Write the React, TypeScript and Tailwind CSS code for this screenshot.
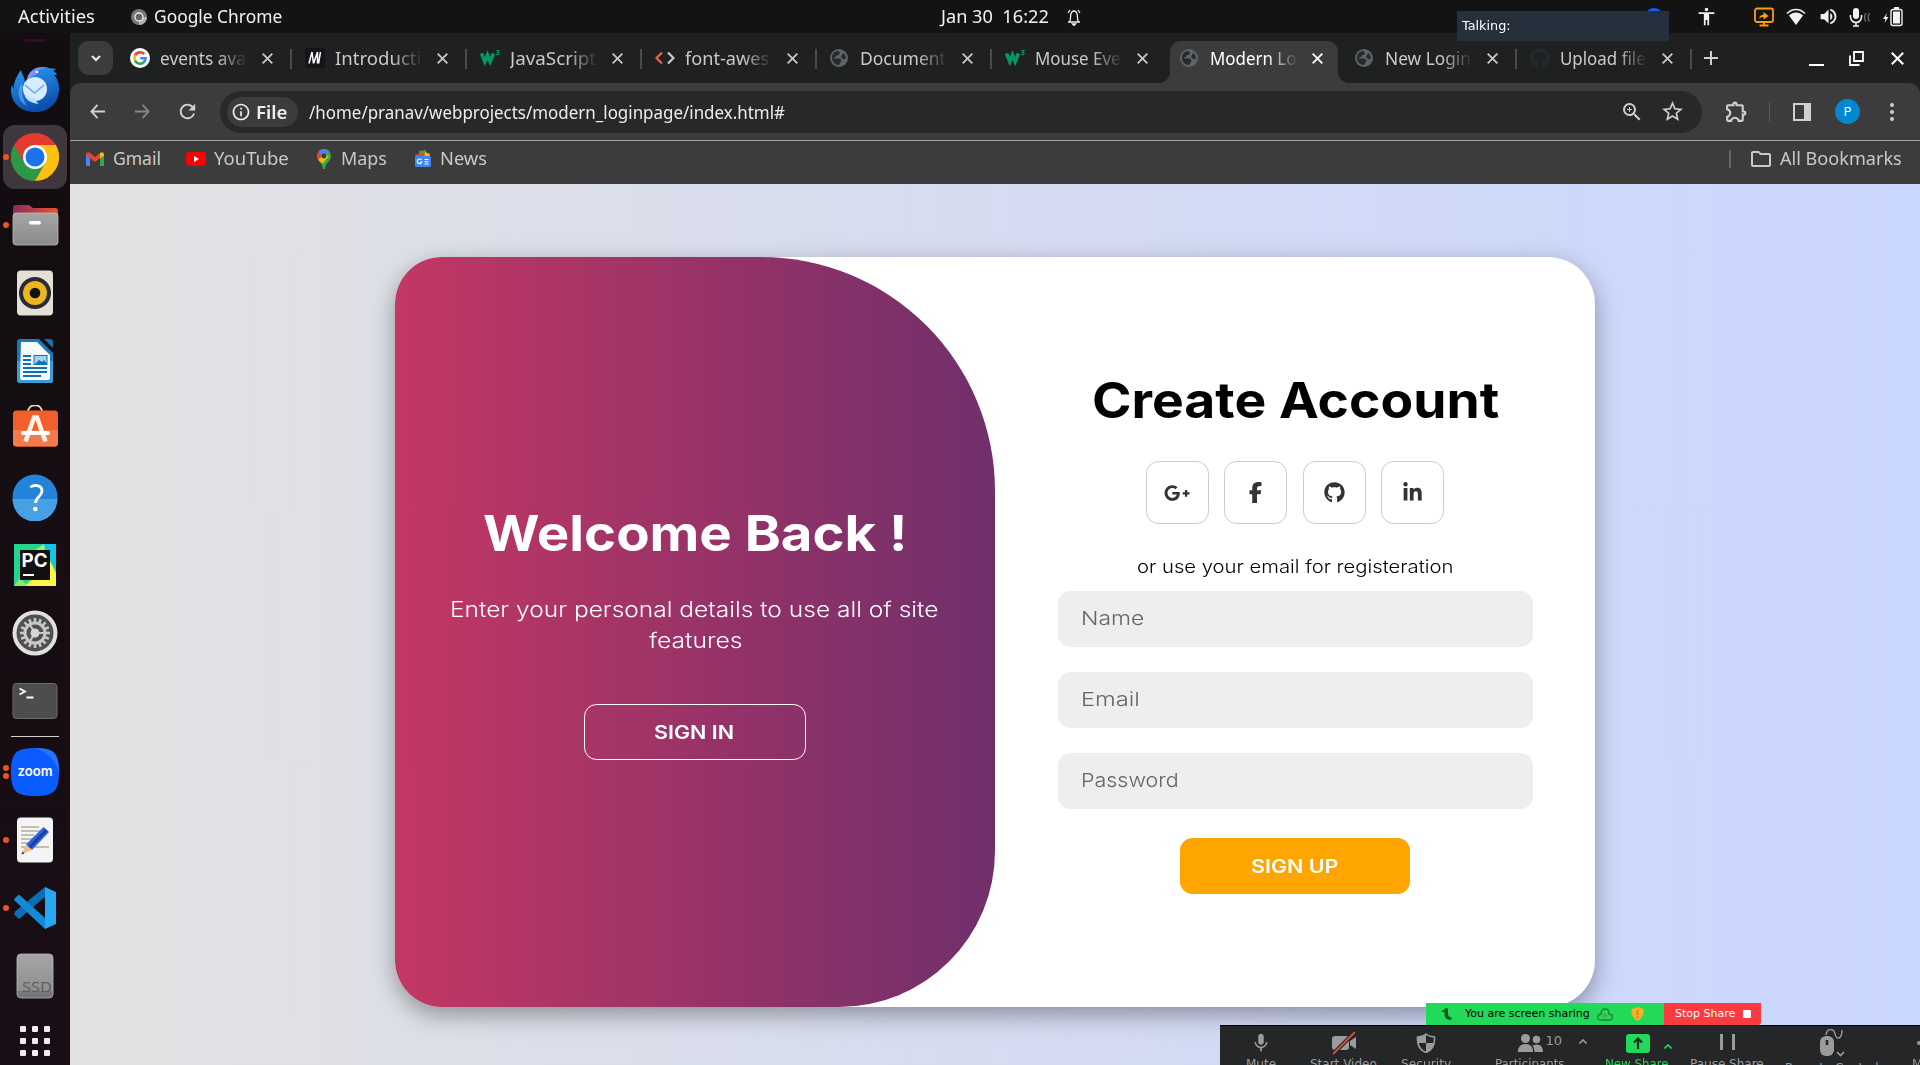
import { useLayoutEffect, useRef, useState } from 'react';
import type { ReactNode } from 'react';
import { FaFacebookF, FaGithub, FaGooglePlusG, FaLinkedinIn } from 'react-icons/fa6';
import { MdOutlineExtension, MdOutlineFolder, MdOutlineInfo, MdPublic, MdRefresh, MdStarBorder, MdZoomIn, MdMic, MdVolumeUp, MdAccessibility } from 'react-icons/md';

/* Single line of text stretched horizontally to a given width. */
function Fit({ w, children, className = '' }: { w: number; children: ReactNode; className?: string }) {
  const ref = useRef<HTMLSpanElement>(null);
  const [scale, setScale] = useState(1);
  useLayoutEffect(() => {
    if (ref.current) setScale(w / ref.current.offsetWidth);
  }, [w]);
  return (
    <span className={`inline-block shrink-0 text-left whitespace-pre ${className}`} style={{ width: w }}>
      <span ref={ref} className="inline-block origin-left" style={{ transform: `scaleX(${scale})` }}>
        {children}
      </span>
    </span>
  );
}

function GoogleG() {
  return (
    <svg viewBox="0 0 20 20" className="size-5">
      <circle cx="10" cy="10" r="10" fill="#fff" />
      <g fill="none" strokeWidth="2.6">
        <path d="M14.2 6.2A5.6 5.6 0 0 0 5 7.4" stroke="#ea4335" />
        <path d="M5.1 7.3a5.6 5.6 0 0 0 0 5.4" stroke="#fbbc05" />
        <path d="M5 12.6a5.6 5.6 0 0 0 8.8 1.6" stroke="#34a853" />
        <path d="M13.6 14.3A5.6 5.6 0 0 0 15.6 10.3H10.2" stroke="#4285f4" />
      </g>
    </svg>
  );
}

function W3() {
  return (
    <svg viewBox="0 0 20 20" className="size-5" fill="none" stroke="#059862">
      <path d="M1.5 5.5l3.3 8L7.5 7l2.700 6.500L13.5 5.5" strokeWidth="3.6" />
      <path d="M16.3 2.500h2.700l-1.600 2c2.400.2 2 3-1.200 2" strokeWidth="1.100" />
    </svg>
  );
}

/* Default page icon: a grey disc with dark land masses. */
function Globe() {
  return (
    <svg viewBox="0 0 18 18" className="size-[18px]">
      <circle cx="9" cy="9" r="9" fill="#5f6368" />
      <path d="M2 8.500C2 5 4.500 2.300 8 2l2 1.500-1 2.500H7L6 8H4.500L4 9.500h6l1.500 2-1 2L9 16C5 16 2 13 2 8.500zM13 4q2.500 1.500 3 5l-1.500 1.500-2-1L11 8z" fill="#27292a" />
    </svg>
  );
}

const tabs: { icon: ReactNode; text: string; w: number; active?: boolean; sep: boolean }[] = [
  { icon: <GoogleG />, text: 'events ava', w: 86, sep: true },
  {
    icon: (
      <svg viewBox="0 0 20 20" className="size-5">
        <path fill="#15141a" d="M0 0h20v20H0z" />
        <path d="M4 15.500l3-11.500 1.500 11.500 4-11.500v11.500M15.500 4l-2 11.500" fill="none" stroke="#fff" strokeWidth="1.500" />
      </svg>
    ),
    text: 'Introducti', w: 86, sep: true,
  },
  { icon: <W3 />, text: 'JavaScript', w: 86, sep: true },
  {
    icon: (
      <svg viewBox="0 0 20 20" className="size-5" fill="none" strokeWidth="2.2">
        <path d="M7 4.500L1.500 10 7 15.500" stroke="#e8673c" />
        <path d="M13 4.500L18.500 10 13 15.500" stroke="#c8c8c8" />
      </svg>
    ),
    text: 'font-awes', w: 84, sep: true,
  },
  { icon: <Globe />, text: 'Document', w: 86, sep: true },
  { icon: <W3 />, text: 'Mouse Eve', w: 86, sep: false },
  { icon: <Globe />, text: 'Modern Lo', w: 86, active: true, sep: false },
  { icon: <Globe />, text: 'New Login', w: 86, sep: true },
  { icon: <FaGithub className="size-5 text-[#24292e]" />, text: 'Upload file', w: 86, sep: true },
];

function X({ className }: { className: string }) {
  return (
    <svg viewBox="0 0 10 10" className={className} fill="none" stroke="currentColor" strokeWidth="1.6">
      <path d="M.6.6l8.800 8.800M9.400.6L.6 9.400" />
    </svg>
  );
}

function TopBar() {
  return (
    <header className="relative flex h-[33px] shrink-0 items-center bg-[#131313] font-['Noto_Sans',sans-serif] text-[17.5px] leading-[30px] text-[#f2f2f2]">
      <Fit w={77} className="-mt-[2px] ml-[18px]">Activities</Fit>
      <svg viewBox="0 0 16 16" className="ml-9 size-4">
        <circle cx="8" cy="8" r="8" fill="#777" />
        <path d="M8 8h8a8 8 0 0 1-8 8z" fill="#b0b0b0" />
        <circle cx="8" cy="8" r="4" fill="#666" stroke="#eee" strokeWidth="1.3" />
      </svg>
      <Fit w={128} className="-mt-[2px] ml-[7px]">Google Chrome</Fit>
      <Fit w={108} className="-mt-[2px] ml-[659px]">{'Jan 30  16:22'}</Fit>
      <svg viewBox="0 0 14 18" className="ml-[18px] h-[18px] w-3.5" fill="none" stroke="#eee" strokeWidth="1.3">
        <path d="M1 14h12M2.500 14c1.500-2 .8-4.500 1.200-7C4.200 4 5.500 3 7 3s2.800 1 3.300 4c.4 2.500-.3 5 1.200 7M1 5L3 2M13 5L11 2" />
        <path d="M5.500 16h3L7 17.500z" fill="#eee" />
      </svg>
      <div className="absolute right-[256px] top-[8px] h-5 w-5 rounded-full bg-[#1d5bf5]" />
      <div className="ml-auto flex items-center pr-[17px]">
        <MdAccessibility className="mr-[37px] size-[21px]" />
        <svg viewBox="0 0 20 20" className="mr-3 size-5" fill="none" stroke="#ff9d0a" strokeWidth="1.8">
          <rect x="1" y="1.500" width="18" height="13.500" rx="2" />
          <path d="M10 15v3M5.500 18.500h9" />
          <path d="M5 12c.5-3 2-4.200 4.500-4.200V5l5 4-5 3.500V10C7.500 10 6 10.500 5 12z" fill="#ff9d0a" stroke="none" />
        </svg>
        <svg viewBox="0 0 20 18" className="mr-3 h-[18px] w-5">
          <path d="M1 5.500C6 0 14 0 19 5.500" fill="none" stroke="#eee" strokeWidth="1.500" />
          <path d="M3 7.500c4-4 10-4 14 0L10 17z" fill="#f2f2f2" />
        </svg>
        <MdVolumeUp className="mr-[10px] size-[21px]" />
        <svg viewBox="0 0 22 20" className="mr-3 h-5 w-[22px]" fill="none" stroke="#f2f2f2" strokeWidth="1.6">
          <rect x="4" y="1" width="6" height="11" rx="3" fill="#f2f2f2" stroke="none" />
          <path d="M1.500 8v2a5.500 5.500 0 0 0 11 0V8M7 15.500V19M4 19h6" />
          <path d="M17 6q-3 4.500 0 8.500M20.500 6q-3 4.500 0 8.500" stroke="#777" strokeWidth="1.2" />
        </svg>
        <svg viewBox="0 0 20 20" className="size-5">
          <path d="M4 6L0 12h2.500L1.500 16l4-6H3z" fill="#f2f2f2" />
          <rect x="8" y="2.500" width="11" height="16" rx="2" fill="none" stroke="#f2f2f2" strokeWidth="1.4" />
          <path d="M10 4.500h7v12h-7zM11 0h5v2h-5z" fill="#f2f2f2" />
        </svg>
      </div>
      <div className="absolute left-[1457px] top-[11px] z-10 flex h-[30px] w-[212px] items-center bg-[#26303c] pl-[5px] font-['DejaVu_Sans',sans-serif] text-[12px] text-white">
        <Fit w={49}>Talking:</Fit>
      </div>
    </header>
  );
}

function DockItem({ children, dots = 0, active = false }: { children: ReactNode; dots?: number; active?: boolean }) {
  return (
    <div className="relative flex h-[68px] w-full shrink-0 items-center justify-center">
      <div className={active ? 'flex size-16 items-center justify-center rounded-xl bg-[#3e373d]' : 'flex size-16 items-center justify-center'}>
        <svg viewBox="0 0 48 48" className="size-12">{children}</svg>
      </div>
      {dots > 0 && (
        <div className="absolute left-[3px] top-0 flex h-full flex-col items-center justify-center gap-[2.5px]">
          <i className="size-1.5 rounded-full bg-[#e95420]" />
          {dots > 1 && <i className="size-1.5 rounded-full bg-[#e95420]" />}
        </div>
      )}
    </div>
  );
}

const gearTeeth = Array.from({ length: 16 }, (_, i) => i * 22.5);

function Dock() {
  return (
    <nav className="flex h-[1032px] w-[70px] shrink-0 flex-col items-center overflow-hidden bg-[linear-gradient(#120d11,#190e15)]">
      <div className="flex h-[22px] w-full shrink-0 justify-center pt-[6px]">
        <div className="h-[3px] w-[22px] rounded-b-full bg-[#3a0a22]" />
      </div>
      <DockItem>
        <defs>
          <linearGradient id="tb" x1="0" y1="0" x2="0.3" y2="1">
            <stop offset="0" stopColor="#2a9df4" />
            <stop offset="1" stopColor="#0b4fae" />
          </linearGradient>
        </defs>
        <path d="M16 14C18 4 28 0 38 3c2 .5 5 .8 7 .8-1 1.500-2 2-3 2.200 2 .5 3 2 4 4-1 .2-2 0-3 0 4 4 5 9 5 14 0 14-10 23-24 23S0 38 0 25c0-3 .5-4 1.500-5 0 2 .5 3 1 4C3 17 5 12 10 5c1 5 4 7 4 12z" fill="url(#tb)" />
        <path d="M16 14C18 5 27 0 37 3c-8-.5-12 3-12 7-4 0-6 3-9 7z" fill="#8f8bf0" />
        <path d="M10 19c-5 9-2 18 6 22-4-7-6-12-4-20z" fill="#7db5ff" opacity=".55" />
        <circle cx="24" cy="24" r="12" fill="#d9ecff" />
        <path d="M14 30c0 4 5 8 14 9-2-1-3-3-3-5z" fill="#bfe0ff" />
        <path d="M14 20l9.500 8 9.500-8" fill="none" stroke="#6aa7e8" strokeWidth="1.500" />
        <circle cx="26" cy="7" r="1.300" fill="#fff" />
      </DockItem>
      <DockItem dots={1} active>
        <circle cx="24" cy="24" r="24" fill="#e33b2e" />
        <path d="M3.200 12A24 24 0 0 0 24 48l10.400-18L24 36 13.600 30z" fill="#2b9a47" />
        <path d="M44.800 12A24 24 0 0 1 24 48l10.400-18V18L24 12z" fill="#fcc10f" />
        <path d="M3.200 12h41.600L24 12a12 12 0 0 0-10.400 18z" fill="#e33b2e" />
        <circle cx="24" cy="24" r="12" fill="#fff" />
        <circle cx="24" cy="24" r="9.500" fill="#1a73e8" />
      </DockItem>
      <DockItem dots={1}>
        <defs>
          <linearGradient id="fo"><stop stopColor="#8a2c5c" /><stop offset="1" stopColor="#e8542a" /></linearGradient>
          <linearGradient id="gr" x2="0" y2="1"><stop stopColor="#a5a5a5" /><stop offset="1" stopColor="#8b8b8b" /></linearGradient>
        </defs>
        <path d="M2 16V7q0-3 3-3h13l4 3h22q3 0 3 3v8z" fill="url(#fo)" />
        <rect x="2" y="12" width="45" height="32" rx="3" fill="url(#gr)" stroke="#bbb" strokeWidth=".8" />
        <rect x="18" y="20" width="12" height="3.500" rx="1.700" fill="#fff" />
      </DockItem>
      <DockItem>
        <rect x="6" y="1.500" width="36" height="45" rx="4" fill="#e4e0d5" />
        <circle cx="24" cy="24" r="16" fill="#2b2b33" />
        <circle cx="24" cy="24" r="12" fill="#eab71c" />
        <circle cx="24" cy="24" r="5.300" fill="#111" />
      </DockItem>
      <DockItem>
        <path d="M9 2h19l14 14v27q0 3-3 3H9q-3 0-3-3V5q0-3 3-3z" fill="#1a79b8" />
        <path d="M6 24h36v19q0 3-3 3H9q-3 0-3-3z" fill="#3a9dd8" />
        <path d="M10 5h16l13 13v23q0 2-2 2H11q-2 0-2-2z" fill="#f5fbff" />
        <path d="M33 2h6q3 0 3 3v6z" fill="#1771ab" />
        <path d="M12 19h8M12 23h8M12 27h8M12 31h24M12 35h24M12 39h18" stroke="#0f70b3" strokeWidth="2" />
        <rect x="23" y="18.500" width="13" height="9" fill="#9fd4f2" stroke="#0f70b3" />
        <path d="M24 27l4-4 3 2 2-2 3 4z" fill="#0f70b3" />
      </DockItem>
      <DockItem>
        <path d="M17 7c0-9 14-9 14 0" fill="none" stroke="#f4d9a8" strokeWidth="1.8" />
        <rect x="2" y="5.500" width="45" height="36" rx="3.500" fill="#f1602a" />
        <path d="M2 25h45v13q0 3.500-3.500 3.500h-38Q2 41.500 2 38z" fill="#f37b4b" />
        <path d="M14.500 36.500L23 12.500h3l8.500 24" fill="none" stroke="#fff0e8" strokeWidth="4.500" />
        <path d="M12 28h25" stroke="#fff" strokeWidth="4" strokeLinecap="round" />
      </DockItem>
      <DockItem>
        <circle cx="24" cy="24" r="22.500" fill="#2283d8" />
        <path d="M1.500 26h45a22.500 22.500 0 0 1-45 0z" fill="#45a1e3" />
        <path d="M19.500 14.500c2-3 11.500-3 11.500 3.500 0 5-6.500 6-6.500 12" fill="none" stroke="#fff" strokeWidth="2.8" />
        <circle cx="24.300" cy="36" r="2.300" fill="#fff" />
      </DockItem>
      <DockItem>
        <path d="M3 3h42v42H3z" fill="#25d58f" />
        <path d="M30 3h15v25z" fill="#12c4ea" />
        <path d="M16 15L33 3l2 12z" fill="#a8ef62" />
        <path d="M39 20l6 12v13H14z" fill="#fcf54a" />
        <path d="M3 45h14l-8-8z" fill="#8bea6b" />
        <path d="M9 9h30v30H9z" fill="#111" />
        <text x="10.500" y="25.500" fill="#fff" fontFamily="Inter" fontWeight="700" fontSize="18.500" textLength="26" lengthAdjust="spacingAndGlyphs">PC</text>
        <path d="M12 33h11v2H12z" fill="#fff" />
      </DockItem>
      <DockItem>
        <circle cx="24" cy="24" r="20.500" fill="#505050" stroke="#e0e0e0" strokeWidth="4" />
        <g fill="#c8c8c8">
          {gearTeeth.map((a) => (
            <rect key={a} x="22.700" y="9" width="2.600" height="5" transform={`rotate(${a} 24 24)`} />
          ))}
        </g>
        <circle cx="24" cy="24" r="10" fill="none" stroke="#c8c8c8" strokeWidth="3" />
        <path d="M24 24h9M24 24l-5 8M24 24l-5-8" stroke="#c8c8c8" strokeWidth="2.2" />
        <circle cx="24" cy="24" r="4.500" fill="#d5d5d5" />
      </DockItem>
      <DockItem>
        <rect x="2" y="6.500" width="44" height="35" rx="3.500" fill="#4d4d4d" stroke="#6c6c6c" />
        <path d="M8.500 11.500l5.500 3-5.500 3M15.500 20.500h7" fill="none" stroke="#fff" strokeWidth="1.8" />
      </DockItem>
      <div className="flex h-[3px] shrink-0 items-center"><div className="h-px w-12 bg-[#d5d0d4]" /></div>
      <DockItem dots={2}>
        <path d="M24 0C43 0 48 5 48 24S43 48 24 48 0 43 0 24 5 0 24 0z" fill="#0b5cff" />
        <path d="M24 0C43 0 48 5 48 24Q42 6 24 0z" fill="#3c80ff" opacity=".6" />
        <text x="6.500" y="28" fill="#fff" fontFamily="Inter" fontWeight="600" fontSize="13.500" textLength="35" lengthAdjust="spacingAndGlyphs">zoom</text>
      </DockItem>
      <DockItem dots={1}>
        <rect x="6" y="1.500" width="36" height="45" rx="4" fill="#f4f4f4" />
        <path d="M10 11h18M10 15h24M10 19h13M10 23h15M10 27h10M10 31h28" stroke="#c3bfb4" strokeWidth="1.8" />
        <path d="M32.500 11l5.500 5-17 18-6-5.500z" fill="#2d62d8" />
        <path d="M34.500 13l2 2-17.500 18-2-2z" fill="#1a429e" />
        <path d="M15 28.500l6 5.500L10.500 38.500z" fill="#f5bd83" />
        <path d="M11.500 35.500l2 2-3 1z" fill="#333" />
      </DockItem>
      <DockItem dots={1}>
        <path d="M34 13L8 35l-5-4.500 1-3L34 3z" fill="#0b6db3" />
        <path d="M4 14l4-3.500L34 34v11L3 16z" fill="#1489d4" />
        <path d="M34 3l11 5v32l-11 5z" fill="#27a7f2" />
      </DockItem>
      <DockItem>
        <rect x="6" y="2" width="36" height="44" rx="4" fill="url(#gr)" stroke="#bdbdbd" strokeWidth=".8" />
        <path d="M6.500 39h35v3q0 3.500-4 3.500h-27q-4 0-4-3.500z" fill="#777" />
        <text x="11" y="40" fill="#5e5e5e" fontFamily="Noto Sans" fontSize="15" textLength="30" lengthAdjust="spacingAndGlyphs">SSD</text>
      </DockItem>
      <div className="grid shrink-0 grid-cols-3 gap-1.5 pt-4">
        {Array.from({ length: 9 }, (_, i) => (
          <i key={i} className="size-1.5 rounded-[1px] bg-[#eee]" />
        ))}
      </div>
    </nav>
  );
}

function TabStrip() {
  return (
    <div className="flex h-[50px] items-start bg-[#1f2120] pl-2 pt-2 text-[#c9c9c9]">
      <button className="flex h-[34px] w-[35px] shrink-0 items-center justify-center rounded-[11px] bg-[#3c3c3c]">
        <svg viewBox="0 0 10 7" className="h-[7px] w-2.5" fill="none" stroke="#eee" strokeWidth="2"><path d="M1 1l4 4 4-4" /></svg>
      </button>
      <div className="ml-[3px] flex">
        {tabs.map((t) => (
          <div key={t.text} className="relative flex h-[42px] w-[175px] shrink-0 items-start">
            {t.active && (
              <div className="absolute inset-y-0 left-[4px] w-[168px] rounded-t-[11px] bg-[#3c3c3c]">
                <div className="absolute -left-3 bottom-0 size-3 bg-[radial-gradient(circle_at_0_0,transparent_12px,#3c3c3c_12.5px)]" />
                <div className="absolute -right-3 bottom-0 size-3 bg-[radial-gradient(circle_at_100%_0,transparent_12px,#3c3c3c_12.5px)]" />
              </div>
            )}
            <div className="relative flex h-[34px] w-full items-center pl-3.5">
              <span className="flex w-[30px] shrink-0">{t.icon}</span>
              <div className={t.active ? 'w-[88px] overflow-hidden text-white mask-r-from-65% mask-r-to-100%' : 'w-[88px] overflow-hidden mask-r-from-65% mask-r-to-100%'}>
                <Fit w={t.w} className="align-top leading-[30px]">{t.text}</Fit>
              </div>
              <X className={t.active ? 'ml-3.5 size-[11px] text-white' : 'ml-3.5 size-[11px]'} />
              {t.sep && <div className="absolute right-[-1px] top-2 h-5 w-0.5 bg-[#4a4a4a]" />}
            </div>
          </div>
        ))}
      </div>
      <div className="flex h-[34px] flex-1 items-center">
        <svg viewBox="0 0 14 14" className="ml-[13px] size-3.5" stroke="#d0d0d0" strokeWidth="2"><path d="M7 0v14M0 7h14" /></svg>
        <div className="ml-auto flex items-center text-white">
          <div className="mr-[25px] mt-[13px] h-[2px] w-[15px] bg-white" />
          <svg viewBox="0 0 15 15" className="mr-[27px] size-[15px]" fill="none" stroke="#fff" strokeWidth="1.8"><path d="M5 1h9v9H5zM1 4.500V14h9.500" /></svg>
          <X className="mr-4 size-[13px]" />
        </div>
      </div>
    </div>
  );
}

function Arrow({ className }: { className: string }) {
  return (
    <svg viewBox="0 0 16 16" className={className} fill="none" stroke="currentColor" strokeWidth="2"><path d="M16 8H1.500M8 1L1.500 8 8 15" /></svg>
  );
}

function Toolbar() {
  return (
    <div className="bg-[#1f2120]">
      <div className="flex h-[57px] items-center rounded-t-[11px] bg-[#3c3c3c] text-[#d0d0d0]">
        <Arrow className="ml-5 size-[15px]" />
        <Arrow className="ml-[30px] size-[15px] rotate-180 text-[#858585]" />
        <MdRefresh className="ml-[26px] size-[23px]" />
        <div className="ml-[21px] flex h-[42px] w-[1482px] items-center rounded-full bg-[#282828] pl-[7px]">
          <div className="flex h-[30px] w-[71px] items-center rounded-full bg-[#3c3c3c] pl-1 text-[#eee]">
            <MdOutlineInfo className="size-5" />
            <Fit w={32} className="ml-[5px] font-semibold leading-[28px]">File</Fit>
          </div>
          <Fit w={476} className="ml-[11px] leading-[30px] text-[#ececec]">/home/pranav/webprojects/modern_loginpage/index.html#</Fit>
          <MdZoomIn className="ml-auto mr-[16px] size-[24px]" />
          <MdStarBorder className="mr-[17px] size-[25px]" />
        </div>
        <MdOutlineExtension className="ml-[22px] size-[25px]" />
        <div className="ml-[20px] h-5 w-px bg-[#5c5c5c]" />
        <svg viewBox="0 0 18 18" className="ml-[23px] size-[18px]"><path d="M1 1h16v16H1z" fill="none" stroke="currentColor" strokeWidth="2" /><path d="M11 0h7v18h-7z" fill="currentColor" /></svg>
        <div className="ml-[24px] flex size-[25px] items-center justify-center rounded-full bg-[#0288d1] font-[Roboto,sans-serif] text-[12px] text-white">P</div>
        <div className="ml-[30px] flex flex-col gap-[3px]">
          {[0, 1, 2].map((i) => <i key={i} className="size-1 rounded-full bg-[#d0d0d0]" />)}
        </div>
      </div>
    </div>
  );
}

function Bookmarks() {
  return (
    <div className="flex h-[44px] items-center border-t border-[#a0a3a2] bg-[#3c3c3c] pb-[7px] leading-[30px] text-[#c9c9c9]">
      <svg viewBox="0 0 18 14" className="ml-4 h-3.5 w-[18px]">
        <path d="M0 2v12h4V6z" fill="#4285f4" />
        <path d="M18 2v12h-4V6z" fill="#34a853" />
        <path d="M0 2q1-3 4-1l5 4 5-4v5L9 10 4 6 0 3.500z" fill="#ea4335" />
        <path d="M14 1q3-2 4 1v1.500L14 6.500z" fill="#fbbc04" />
      </svg>
      <Fit w={48} className="-mt-[2px] ml-[9px]">Gmail</Fit>
      <svg viewBox="0 0 20 14" className="ml-[25px] h-3.5 w-5"><rect width="20" height="14" rx="3.500" fill="#f00" /><path d="M8 4l5 3-5 3z" fill="#fff" /></svg>
      <Fit w={75} className="-mt-[2px] ml-2">YouTube</Fit>
      <svg viewBox="0 0 14 20" className="ml-[28px] h-5 w-3.5">
        <path d="M7 0a7 7 0 0 1 7 7c0 5-5.500 6-6 13H6C5.500 13 0 12 0 7a7 7 0 0 1 7-7z" fill="#34a853" />
        <path d="M0 7a7 7 0 0 1 2-5l4 3-4.800 5.800Q0 9.500 0 7z" fill="#ea4335" />
        <path d="M2 2a7 7 0 0 1 10 0L5 8z" fill="#4285f4" />
        <path d="M1.200 10.800L9 5l4 4.500c-2 2.500-4 4-4.500 5.500L4.500 14q-2-1.500-3.300-3.200z" fill="#fbbc04" opacity=".95" />
        <path d="M14 7c0 4-4 5.500-5.500 9H5l5-7z" fill="#34a853" />
        <circle cx="7" cy="7" r="2.400" fill="#3c3c3c" />
      </svg>
      <Fit w={46} className="-mt-[2px] ml-[10px]">Maps</Fit>
      <svg viewBox="0 0 18 18" className="ml-[27px] size-[18px]">
        <path d="M5 1l7-1 1 8H5z" fill="#34a853" />
        <path d="M1 5l10-3 2 6H2z" fill="#ea4335" />
        <path d="M11 2l5 2-1 4h-5z" fill="#fbbc04" />
        <rect x="1" y="6" width="16" height="11" rx="1.500" fill="#4285f4" />
        <path d="M7.500 10A2.300 2.300 0 1 0 7.800 12H5.800M10.500 9.500h4M10.500 11.700h4M10.500 14h4" fill="none" stroke="#fff" strokeWidth="1.1" />
      </svg>
      <Fit w={47} className="-mt-[2px] ml-[8px]">News</Fit>
      <div className="ml-auto h-[18px] w-0.5 bg-[#666]" />
      <MdOutlineFolder className="ml-[18px] size-[24px]" />
      <Fit w={122} className="-mt-[2px] ml-[7px] mr-[18px]">All Bookmarks</Fit>
    </div>
  );
}

function Field({ label, w }: { label: string; w: number }) {
  return (
    <div className="flex h-14 w-[475px] items-center rounded-[12.5px] bg-[#eee] pb-px pl-[23px] text-[19.3px] font-light text-[#666]">
      <Fit w={w}>{label}</Fit>
    </div>
  );
}

const socials = [FaGooglePlusG, FaFacebookF, FaGithub, FaLinkedinIn];

function Card() {
  return (
    <main className="mx-auto mt-[73px] flex h-[750px] w-[1200px] overflow-hidden rounded-[47px] bg-white font-[Inter,sans-serif] shadow-[0_8px_23px_rgba(0,0,0,0.35)]">
      <section className="flex w-[600px] flex-col items-center rounded-tr-[234px] rounded-br-[156px] bg-[linear-gradient(to_right,#c33764,#702f6b)] pt-[246px] text-white">
        <h1 className="text-[49.5px] leading-[60px] font-bold"><Fit w={424}>Welcome Back !</Fit></h1>
        <p className="mt-[31px] flex flex-col items-center text-[21px] leading-[31px] font-light">
          <Fit w={488} className="-ml-[2px]">Enter your personal details to use all of site</Fit>
          <Fit w={93}>features</Fit>
        </p>
        <button className="mt-12 flex h-14 w-[222px] items-center justify-center rounded-[12.5px] border border-white text-[18px] font-semibold">
          <Fit w={80} className="-ml-[2px]">SIGN IN</Fit>
        </button>
      </section>
      <section className="flex w-[600px] flex-col items-center pt-[112px] text-black">
        <h1 className="mt-px text-[49.5px] leading-[60px] font-bold"><Fit w={407}>Create Account</Fit></h1>
        <div className="mt-[31px] flex gap-[15.5px]">
          {socials.map((Icon, i) => (
            <a key={i} className="flex size-[63px] items-center justify-center rounded-[12.5px] border border-[#ccc] text-[#333]">
              <Icon className={i === 0 ? 'h-[22px] w-[26px]' : 'size-[21px]'} />
            </a>
          ))}
        </div>
        <Fit w={316} className="mt-[31px] text-[18px] leading-[24px] font-light">or use your email for registeration</Fit>
        <div className="mt-3 flex flex-col gap-[25px]">
          <Field label="Name" w={63} />
          <Field label="Email" w={59} />
          <Field label="Password" w={98} />
        </div>
        <button className="mt-[29px] flex h-14 w-[230px] items-center justify-center rounded-[12.5px] bg-[#ffa500] text-[18px] font-semibold text-white">
          <Fit w={87} className="-ml-[2px]">SIGN UP</Fit>
        </button>
      </section>
    </main>
  );
}

const meeting: { label: string; w: number; ml: number; color: string; icon: ReactNode }[] = [
  { label: 'Mute', w: 30, ml: 26, color: 'text-[#9a9b9c]', icon: <MdMic className="h-[26px] w-[22px]" /> },
  {
    label: 'Start Video', w: 67, ml: 34, color: 'text-[#9a9b9c]',
    icon: (
      <svg viewBox="0 0 26 24" className="h-6 w-[26px]" fill="currentColor">
        <rect x="1" y="5" width="17" height="14" rx="3" /><path d="M19 10l6-4v12l-6-4z" />
        <path d="M2 23L24 1" stroke="#242628" strokeWidth="4" /><path d="M2 23L24 1" stroke="#e8453c" strokeWidth="1.8" />
      </svg>
    ),
  },
  {
    label: 'Security', w: 50, ml: 24, color: 'text-[#9a9b9c]',
    icon: (
      <svg viewBox="0 0 20 20" className="size-5"><path d="M10 1c2 2 5 2.500 8.500 3 .5 8-2.500 13-8.500 15.500C4 17 1 12 1.500 4 5 3.500 8 3 10 1z" fill="none" stroke="currentColor" strokeWidth="1.6" /><path d="M10 1v9H1.600V4C5 3.500 8 3 10 1zM10 10h8.300q-1.300 7-8.300 9.500z" fill="currentColor" /></svg>
    ),
  },
  {
    label: 'Participants', w: 70, ml: 44, color: 'text-[#9a9b9c]',
    icon: (
      <div className="relative flex items-center">
        <svg viewBox="0 0 25 20" className="h-5 w-[25px]" fill="currentColor">
          <circle cx="7.500" cy="5.500" r="4.500" /><circle cx="18.500" cy="6.500" r="3.800" />
          <path d="M0 19q0-8 7.500-8t7.500 8zM16.500 19q0-4-2-6.500 10-3.500 10.500 6.500z" />
        </svg>
        <span className="absolute left-[28px] top-0 text-[13px] leading-4">10</span>
        <svg viewBox="0 0 8 5" className="absolute left-[61px] top-1.5 h-[5px] w-2" fill="none" stroke="currentColor" strokeWidth="1.6"><path d="M.5 4.500L4 1l3.500 3.500" /></svg>
      </div>
    ),
  },
  {
    label: 'New Share', w: 64, ml: 40, color: 'text-[#23d959]',
    icon: (
      <div className="relative left-px">
        <svg viewBox="0 0 24 19" className="h-[19px] w-6"><rect width="24" height="19" rx="3" fill="#23d959" /><path d="M12 15V4.500M8 8.500l4-4 4 4" fill="none" stroke="#1b2a20" strokeWidth="2.2" /></svg>
        <svg viewBox="0 0 8 5" className="absolute left-[38px] top-[10px] h-[5px] w-2" fill="none" stroke="#23d959" strokeWidth="1.6"><path d="M.5 4.500L4 1l3.500 3.500" /></svg>
      </div>
    ),
  },
  {
    label: 'Pause Share', w: 74, ml: 21, color: 'text-[#9a9b9c]',
    icon: <div className="flex gap-[9px] pb-[2px]"><i className="h-4 w-[3px] bg-[#9a9b9c]" /><i className="h-4 w-[3px] bg-[#9a9b9c]" /></div>,
  },
  {
    label: 'Remote Control', w: 94, ml: 21, color: 'text-[#9a9b9c]',
    icon: (
      <svg viewBox="0 0 26 28" className="-mt-px h-7 w-[26px]"><rect x="1" y="7" width="14" height="20" rx="6" fill="currentColor" /><path d="M8 11v5" stroke="#242628" strokeWidth="2.5" /><path d="M7 6c1-7 8-7 9-1s7 6 7-4" fill="none" stroke="currentColor" strokeWidth="1.4" /><path d="M18 23l3.500 3.500L25 23" fill="none" stroke="currentColor" strokeWidth="1.6" /></svg>
    ),
  },
  {
    label: 'More', w: 31, ml: 33, color: 'text-[#9a9b9c]',
    icon: <div className="flex gap-[3px] pr-1">{[0, 1, 2].map((i) => <i key={i} className="size-[4px] rounded-full bg-[#9a9b9c]" />)}</div>,
  },
];

/* Floating screen-share controls over the bottom edge of the desktop. */
function SharingControls() {
  return (
    <div className="absolute bottom-0 right-0 w-[700px] font-['DejaVu_Sans',sans-serif]">
      <div className="ml-[206px] flex h-[22px] w-[335px] text-[11px] leading-[22px]">
        <div className="flex w-[238px] items-center bg-[#23d959] text-black">
          <svg viewBox="0 0 12 12" className="ml-[15px] h-3 w-3"><path d="M0 4l5-4 2 .5v6q1 3 4 3L10 12Q4 12 3.500 7V4z" fill="#0c5a1e" /></svg>
          <Fit w={125} className="ml-3">You are screen sharing</Fit>
          <svg viewBox="0 0 16 13" className="ml-[7px] h-[13px] w-4"><path d="M4 12Q0 12 .8 8.500 1.500 6 4 6q0-5 4-5.200Q12 1 12 6q3 0 3.300 2.700Q15.500 12 12 12z" fill="none" stroke="#148a35" strokeWidth="1.4" /><circle cx="8" cy="7.500" r="2" fill="#6c9a45" /></svg>
          <svg viewBox="0 0 13 14" className="ml-[18px] h-3.5 w-[13px]"><path d="M6.500 0L12.500 2Q13.500 10 6.500 14-.5 10 .5 2z" fill="#f6b02c" /><path d="M6.500 3.500v4.500M6.500 9.500v1.800" stroke="#c37912" strokeWidth="1.5" /></svg>
        </div>
        <div className="flex flex-1 items-center rounded-br-[3px] bg-[#fb3b3f] text-white">
          <Fit w={60} className="ml-[11px]">Stop Share</Fit>
          <i className="ml-2 size-2 rounded-[1px] bg-white" />
        </div>
      </div>
      <div className="flex h-10 overflow-hidden border-t border-black bg-[#242628]">
        {meeting.map((m) => (
          <div key={m.label} className={`flex shrink-0 flex-col items-center ${m.color}`} style={{ width: m.w, marginLeft: m.ml }}>
            <div className="flex h-[34px] shrink-0 items-center justify-center">{m.icon}</div>
            <Fit w={m.w} className={m.label === 'Remote Control' ? 'mt-[2px] text-[12px] leading-[12px]' : '-mt-[2px] text-[12px] leading-[12px]'}>{m.label}</Fit>
          </div>
        ))}
      </div>
    </div>
  );
}

export default function App() {
  return (
    <div className="relative flex h-[1065px] w-[1920px] flex-col overflow-hidden bg-black">
      <TopBar />
      <div className="flex">
        <Dock />
        <div className="flex h-[1032px] w-[1850px] flex-col font-['Noto_Sans',sans-serif] text-[17.5px]">
          <TabStrip />
          <Toolbar />
          <Bookmarks />
          <div className="flex-1 overflow-hidden bg-[linear-gradient(to_right,#e2e2e2,#c9d6ff)]">
            <Card />
          </div>
        </div>
      </div>
      <SharingControls />
    </div>
  );
}
